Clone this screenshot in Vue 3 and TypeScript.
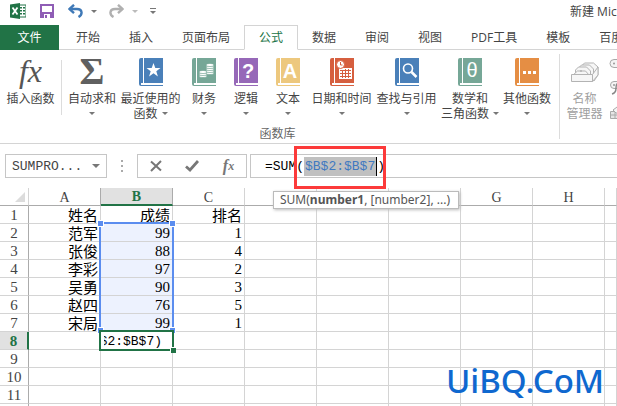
<script setup lang="ts">
interface RibbonItem {
  lines: string[]
  size: 'small' | 'medium' | 'wide' | 'large'
  icon: string
  color: string
}

const tabs: string[] = ['开始', '插入', '页面布局', '公式', '数据', '审阅', '视图', 'PDF工具', '模板', '百度网盘']
const activeTab = '公式'

const items: RibbonItem[] = [
  { lines: ['自动求和'], size: 'medium', icon: 'sum', color: '' },
  { lines: ['最近使用的', '函数'], size: 'large', icon: 'star', color: '#4a80b9' },
  { lines: ['财务'], size: 'small', icon: 'coins', color: '#76a797' },
  { lines: ['逻辑'], size: 'small', icon: 'logic', color: '#9668b8' },
  { lines: ['文本'], size: 'small', icon: 'text', color: '#edc87e' },
  { lines: ['日期和时间'], size: 'large', icon: 'date', color: '#d65f3f' },
  { lines: ['查找与引用'], size: 'large', icon: 'search', color: '#4a80b9' },
  { lines: ['数学和', '三角函数'], size: 'wide', icon: 'theta', color: '#76a797' },
  { lines: ['其他函数'], size: 'medium', icon: 'more', color: '#e58e44' },
]

const columns: string[] = ['A', 'B', 'C', 'D', 'E', 'F', 'G', 'H', '']
const cells: Record<number, string[]> = {
  1: ['姓名', '成绩', '排名'],
  2: ['范军', '99', '1'],
  3: ['张俊', '88', '4'],
  4: ['李彩', '97', '2'],
  5: ['吴勇', '90', '3'],
  6: ['赵四', '76', '5'],
  7: ['宋局', '99', '1'],
}
const cell = (row: number, col: number): string => cells[row]?.[col] ?? ''
const isNumber = (value: string): boolean => /^\d+$/.test(value)
</script>

<template>
  <div class="excel">
    <header class="titlebar">
      <div class="quick">
        <svg class="q-logo" width="16" height="16" viewBox="0 0 16 16" aria-hidden="true">
          <path d="M9 2h7v12H9z" fill="#fff" stroke="#217346" />
          <path d="M10 4h2v1.5h-2zM13 4h2v1.5h-2zM10 7h2v1.5h-2zM13 7h2v1.5h-2zM10 10h2v1.5h-2zM13 10h2v1.5h-2z" fill="#217346" />
          <path d="M0 1.6L10 0v16L0 14.4z" fill="#217346" />
          <path d="M2.5 4.5l5 7M7.5 4.5l-5 7" stroke="#fff" stroke-width="1.8" />
        </svg>
        <button class="q-save" aria-label="保存">
          <svg width="14" height="14" viewBox="0 0 14 14"><path d="M1 1h12v12H1z" fill="#fff" stroke="#8f5db5" stroke-width="2" /><path d="M1 8h12v5H1z" fill="#8f5db5" /><path d="M4 10h6v4H4z" fill="#fff" /><path d="M5 11h2v3H5z" fill="#8f5db5" /></svg>
        </button>
        <button class="q-undo" aria-label="撤消">
          <svg width="15" height="14" viewBox="0 0 15 14"><path d="M1.5 5H9c5.500 0 6 5.500 1.500 8" fill="none" stroke="#3f79b7" stroke-width="2.400" /><path d="M6 .8L1.600 5 6 9.200" fill="none" stroke="#3f79b7" stroke-width="2.400" /></svg>
        </button>
        <button class="q-caret" aria-label="撤消列表"><i class="caret"></i></button>
        <button class="q-undo" aria-label="恢复">
          <svg width="15" height="14" viewBox="0 0 15 14"><path d="M13.500 5H6C.5 5 0 10.500 4.500 13" fill="none" stroke="#b0b0b0" stroke-width="2.400" /><path d="M9 .8L13.400 5 9 9.200" fill="none" stroke="#b0b0b0" stroke-width="2.400" /></svg>
        </button>
        <button class="q-caret pale" aria-label="恢复列表"><i class="caret"></i></button>
        <button class="q-custom" aria-label="自定义快速访问工具栏"><i class="bar"></i><i class="caret"></i></button>
      </div>
      <div class="title">新建 Microsoft Excel</div>
    </header>

    <nav class="tabs">
      <button class="file">文件</button>
      <button v-for="tab in tabs" :key="tab" class="tab" :class="{ active: tab === activeTab }">{{ tab }}</button>
    </nav>

    <section class="ribbon">
      <button class="item insert">
        <span class="glyph fx">fx</span>
        <span class="caption">插入函数</span>
      </button>
      <div class="rule short"></div>
      <div class="group">
        <div class="group-items">
          <button v-for="item in items" :key="item.icon" class="item" :class="item.size">
            <svg class="glyph" width="24" height="28" viewBox="0 0 24 28" aria-hidden="true">
              <text v-if="item.icon === 'sum'" x="12" y="26" class="sigma">Σ</text>
              <template v-else>
                <path d="M2 0h22v25H3v2h21v1H2a2 2 0 0 1-2-2V2a2 2 0 0 1 2-2z" :fill="item.color" />
                <path d="M4.500 0v25" stroke="#fff" />
                <path d="M2 25h22v2H2z" fill="#fff" />
                <path v-if="item.icon === 'star'" d="M14.500 5l1.800 5h5.200l-4.200 3.200 1.600 5.200-4.400-3.200-4.400 3.200 1.600-5.200L7.500 10h5.200z" fill="#fff" />
                <g v-if="item.icon === 'coins'" fill="#fff" :stroke="item.color" stroke-width=".7">
                  <ellipse cx="11" cy="18" rx="4" ry="1.600" /><ellipse cx="11" cy="16" rx="4" ry="1.600" /><ellipse cx="11" cy="14" rx="4" ry="1.600" />
                  <ellipse cx="18" cy="15" rx="4" ry="1.600" /><ellipse cx="18" cy="13" rx="4" ry="1.600" /><ellipse cx="18" cy="11" rx="4" ry="1.600" /><ellipse cx="18" cy="9" rx="4" ry="1.600" /><ellipse cx="18" cy="7" rx="4" ry="1.600" />
                </g>
                <text v-if="item.icon === 'logic'" x="14" y="20" class="letter">?</text>
                <text v-if="item.icon === 'text'" x="14" y="20" class="letter">A</text>
                <text v-if="item.icon === 'theta'" x="14" y="19" class="letter thin">θ</text>
                <g v-if="item.icon === 'date'">
                  <path d="M9 10h13v11H9z" fill="#fff" />
                  <path d="M9 12.500h13M9 15.500h13M9 18.500h13M12.500 12v9M15.500 10v11M18.500 10v11" :stroke="item.color" />
                  <path d="M9.500 10.500h12v10h-12z" fill="none" stroke="#fff" />
                  <circle cx="10.500" cy="6.500" r="4" fill="#fff" :stroke="item.color" />
                  <path d="M10.500 4v3h2" fill="none" :stroke="item.color" />
                </g>
                <g v-if="item.icon === 'search'" fill="none" stroke="#fff">
                  <circle cx="13" cy="10.500" r="4.500" stroke-width="1.600" /><path d="M16.500 14l5 5" stroke-width="2.500" />
                </g>
                <path v-if="item.icon === 'more'" d="M8 13h3v3H8zM13 13h3v3h-3zM18 13h3v3h-3z" fill="#fff" />
              </template>
            </svg>
            <span class="caption">{{ item.lines[0] }}</span>
            <span class="caption">{{ item.lines[1] }}<i class="caret"></i></span>
          </button>
        </div>
        <div class="group-name">函数库</div>
      </div>
      <div class="rule"></div>
      <button class="item names" disabled>
        <svg class="glyph" width="28" height="28" viewBox="0 0 28 28" aria-hidden="true">
          <g fill="#f6f6f6" stroke="#b3b3b3">
            <path d="M10.500 15V8l3-3h9l4.500 4v8l-4 6z" /><path d="M7.500 16v-6l3-3h8l4 4v6" /><path d="M4.500 17v-5l3-3h8l4 4v4" /><path d="M1.500 17.500l5-4.500h8l4 4.500" />
            <path d="M.5 16.500h21v7H.5z" /><path d="M21.500 23.500l5.500-6.500V9l-5.500 7.500z" />
          </g>
          <circle cx="10" cy="13" r="1" fill="#b3b3b3" />
        </svg>
        <span class="caption">名称</span>
        <span class="caption">管理器</span>
      </button>
      <div class="side" aria-hidden="true">
        <svg width="24" height="12" viewBox="0 0 24 12"><path d="M5 1.500h16v8H5a4 4 0 0 1 0-8z" fill="#f4f4f4" stroke="#a8a8a8" /><circle cx="5" cy="5.500" r="1" fill="#999" /></svg>
        <svg width="24" height="16" viewBox="0 0 24 16"><path d="M5 1.500h16v7H5a3.500 3.500 0 0 1 0-7z" fill="#f4f4f4" stroke="#a8a8a8" /><circle cx="5" cy="5" r="1" fill="#999" /><path d="M10 3q-3 0-3 5t-4 6" fill="none" stroke="#888" stroke-width="1.500" /></svg>
        <svg width="24" height="14" viewBox="0 0 24 14"><path d="M1.500 5.500h14v7h-14zM1 9h14M6 5v8" fill="#e5e5e5" stroke="#aaa" /><path d="M4 4l4-3h12v6H7z" fill="#f4f4f4" stroke="#a8a8a8" /></svg>
      </div>
    </section>

    <section class="formula-bar">
      <div class="namebox">
        <input type="text" value="SUMPRO..." aria-label="名称框" />
        <button aria-label="名称列表"><i class="caret big"></i></button>
      </div>
      <div class="grip"><i></i><i></i><i></i></div>
      <div class="actions">
        <button aria-label="取消"><svg width="12" height="12" viewBox="0 0 12 12"><path d="M1 1.500l10 9M11 1L1 11" stroke="#777" stroke-width="2" /></svg></button>
        <button aria-label="输入"><svg width="14" height="12" viewBox="0 0 14 12"><path d="M1 6.500l4 3.500L13 1" fill="none" stroke="#777" stroke-width="2.800" /></svg></button>
        <button class="small-fx" aria-label="插入函数">f<small>x</small></button>
      </div>
      <div class="formula" role="textbox" aria-label="编辑栏" contenteditable="true" spellcheck="false">=SUM(<span class="range">$B$2:$B$7<span class="frame"></span></span>)</div>
    </section>

    <main class="sheet">
      <table>
        <colgroup>
          <col class="c-head" />
          <col v-for="n in 8" :key="n" class="c-data" />
          <col />
        </colgroup>
        <thead>
          <tr>
            <th class="corner"><svg width="10" height="10" viewBox="0 0 10 10"><path d="M10 0v10H0z" fill="#dcdcdc" /></svg></th>
            <th v-for="(name, i) in columns" :key="i" scope="col" :class="{ selected: name === 'B', before: name === 'A' }">{{ name === 'D' || name === 'E' || name === 'F' ? '' : name }}</th>
          </tr>
        </thead>
        <tbody>
          <tr v-for="row in 12" :key="row">
            <th scope="row" :class="{ selected: row === 8 }">{{ row }}</th>
            <td v-for="(name, i) in columns" :key="i" :class="{ num: isNumber(cell(row, i)), ranged: i === 1 && row > 1 && row < 8 }">{{ cell(row, i) }}</td>
          </tr>
        </tbody>
      </table>
      <div class="marquee"><i class="h tl"></i><i class="h tr"></i><i class="h bl"></i><i class="h br"></i></div>
      <div class="editor"><span>=SUM($B$2:$B$7)</span><i class="fill"></i></div>
      <div class="tip">SUM(<b>number1</b>, [number2], ...)</div>
      <div class="watermark">UiBQ.CoM</div>
    </main>
  </div>
</template>

<style>
body {
  overflow: hidden;
  background: #fff;
}
</style>

<style scoped>
* {
  box-sizing: border-box;
}
.excel {
  height: 100vh;
  overflow: hidden;
  font: 12px/15px "Open Sans", "Noto Sans CJK SC", sans-serif;
  color: #444;
}
button {
  padding: 0;
  border: 0;
  background: none;
  font: inherit;
  color: inherit;
}
.caret {
  display: inline-block;
  border: 3px solid transparent;
  border-top-color: #777;
  border-bottom: 0;
}
.caret.big {
  border-width: 4px;
  border-bottom: 0;
}
.titlebar {
  display: flex;
  justify-content: space-between;
  height: 25px;
  padding-left: 10px;
}
.quick {
  display: flex;
  align-items: center;
  height: 22px;
}
.quick button {
  display: flex;
}
.q-save {
  margin: 0 14px;
}
.q-caret {
  margin: 0 12px 0 8px;
}
.pale {
  opacity: 0.5;
}
.quick .q-custom {
  flex-direction: column;
  gap: 2px;
}
.bar {
  height: 1px;
  background: #777;
}
.title {
  width: 47px;
  line-height: 23px;
  white-space: nowrap;
}
.tabs {
  display: flex;
  height: 25px;
  border-bottom: 1px solid #d4d4d4;
  white-space: nowrap;
}
.file {
  flex: none;
  width: 59px;
  height: 25px;
  margin-right: 2px;
  background: #217346;
  color: #fff;
}
.tab {
  flex: none;
  height: 25px;
  margin-right: -1px;
  padding: 0 14px;
  border: 1px solid transparent;
}
.tab.active {
  border-color: #d4d4d4 #d4d4d4 #fff;
  background: #fff;
  color: #217346;
}
.ribbon {
  display: flex;
  height: 94px;
  padding-top: 4px;
  border-bottom: 1px solid #d4d4d4;
}
.item {
  display: flex;
  flex: none;
  flex-direction: column;
  align-items: center;
  height: 67px;
  padding-top: 4px;
  white-space: nowrap;
}
.glyph {
  display: block;
  flex: none;
  height: 28px;
  margin-bottom: 5px;
}
.caption {
  display: flex;
  align-items: center;
  height: 15px;
  gap: 4px;
}
.small {
  width: 42px;
}
.medium {
  width: 52px;
}
.wide {
  width: 62px;
}
.large {
  width: 65px;
}
.insert {
  width: 61px;
}
.fx {
  font: italic 32px/26px "Liberation Serif", serif;
  color: #555;
}
.sigma {
  font: bold 38px "Liberation Serif", serif;
  text-anchor: middle;
  fill: #606060;
}
.letter {
  font: bold 20px "Liberation Sans", sans-serif;
  text-anchor: middle;
  fill: #fff;
}
.thin {
  font-weight: normal;
}
.rule {
  flex: none;
  width: 1px;
  height: 85px;
  background: #dcdcdc;
}
.rule.short {
  height: 55px;
  margin: 6px 4px 0 0;
}
.group {
  flex: none;
  margin-right: 6px;
}
.group-items {
  display: flex;
}
.group-name {
  padding-top: 5px;
  padding-right: 64px;
  text-align: center;
  color: #666;
}
.names {
  width: 49px;
  color: #a0a0a0;
}
.side {
  display: flex;
  flex-direction: column;
  gap: 10px;
  padding-top: 4px;
}
.formula-bar {
  display: flex;
  height: 44px;
  padding: 10px 0 10px 5px;
  font: 13px/22px "Liberation Mono", monospace;
}
.namebox {
  display: flex;
  flex: none;
  width: 102px;
  border: 1px solid #c6c6c6;
}
.namebox input {
  flex: 1;
  min-width: 0;
  padding: 2px 0 0 6px;
  border: 0;
  outline: 0;
  background: none;
  font: inherit;
  color: #444;
}
.namebox button {
  display: flex;
  align-items: center;
  width: 14px;
}
.grip {
  display: flex;
  flex: none;
  flex-direction: column;
  align-items: center;
  justify-content: center;
  gap: 3px;
  width: 30px;
}
.grip i {
  width: 2px;
  height: 2px;
  background: #aaa;
}
.actions {
  display: flex;
  flex: none;
  align-items: center;
  justify-content: space-around;
  width: 110px;
  margin-right: 3px;
  border: 1px solid #c6c6c6;
}
.actions button {
  display: flex;
}
.actions .small-fx {
  font: italic bold 16px/20px "Liberation Serif", serif;
  color: #777;
}
.small-fx small {
  font-size: 12px;
}
.formula {
  flex: 1;
  padding: 1px 0 0 14px;
  border: 1px solid #c6c6c6;
  border-right: 0;
  outline: 0;
  white-space: nowrap;
  color: #000;
}
.range {
  position: relative;
  padding: 2px 1px;
  border-right: 1px solid #000;
  background: #c0c0c0;
  color: #3f79c0;
}
.frame {
  position: absolute;
  inset: -11px -10px -13px -10px;
  border: 3px solid #fc3a3a;
  z-index: 2;
}
.sheet {
  position: relative;
}
table {
  width: 100%;
  table-layout: fixed;
  border-collapse: separate;
  border-spacing: 0;
}
.c-head {
  width: 29px;
}
.c-data {
  width: 72px;
}
th,
td {
  height: 18px;
  padding: 0;
  border: 0 solid #d4d4d4;
  border-width: 0 1px 1px 0;
  line-height: 17px;
  vertical-align: top;
}
th {
  padding-top: 2px;
  font: 15px/15px "Liberation Serif", serif;
  color: #444;
}
thead th {
  border-bottom-color: #ababab;
  font-size: 14px;
}
thead .before {
  border-right-color: #ababab;
}
thead .selected {
  border-right-color: #ababab;
  border-bottom: 2px solid #217346;
  line-height: 14px;
}
.selected {
  background: #e1e1e1;
  font-weight: bold;
  color: #217346;
}
tbody th {
  border-right-color: #ababab;
}
tbody .selected {
  border-right: 2px solid #217346;
}
th.corner {
  padding-top: 0;
}
.corner svg {
  display: block;
  margin: 4px 3px 3px 15px;
}
td {
  padding-right: 2px;
  text-align: right;
  font-family: "Noto Sans CJK SC", sans-serif;
  font-size: 15px;
  color: #000;
}
.num {
  padding-top: 2px;
  line-height: 15px;
  font-family: "Liberation Serif", serif;
}
.ranged {
  background: #edf2fe;
}
.marquee {
  position: absolute;
  left: 99px;
  top: 34px;
  width: 75px;
  height: 110px;
  border: 2px solid #5b8def;
}
.h {
  position: absolute;
  width: 7px;
  height: 7px;
  border: 1px solid #fff;
  background: #5b8def;
}
.tl,
.bl {
  left: -4px;
}
.tr,
.br {
  right: -4px;
}
.tl,
.tr {
  top: -4px;
}
.bl,
.br {
  bottom: -4px;
}
.editor {
  position: absolute;
  left: 99px;
  top: 142px;
  display: flex;
  width: 75px;
  height: 21px;
  border: 2px solid #217346;
  background: #fff;
  font: 13px/19px "Liberation Mono", monospace;
  color: #000;
}
.editor span {
  display: flex;
  flex: 1;
  justify-content: flex-end;
  overflow: hidden;
  margin-left: 3px;
  padding-right: 10px;
}
.fill {
  position: absolute;
  right: -4px;
  bottom: -4px;
  width: 6px;
  height: 6px;
  border: 1px solid #fff;
  border-width: 1px 0 0 1px;
  background: #217346;
}
.tip {
  position: absolute;
  left: 273px;
  top: 3px;
  padding: 0 8px 0 6px;
  border: 1px solid #bbb;
  background: #fff;
  box-shadow: 1px 1px 3px #bbb;
  font-family: "Noto Sans", sans-serif;
  line-height: 16px;
  white-space: nowrap;
  color: #555;
}
.watermark {
  position: absolute;
  left: 446px;
  top: 173px;
  font: 500 33px/40px "Noto Sans", sans-serif;
  color: #0f68cf;
}
</style>
